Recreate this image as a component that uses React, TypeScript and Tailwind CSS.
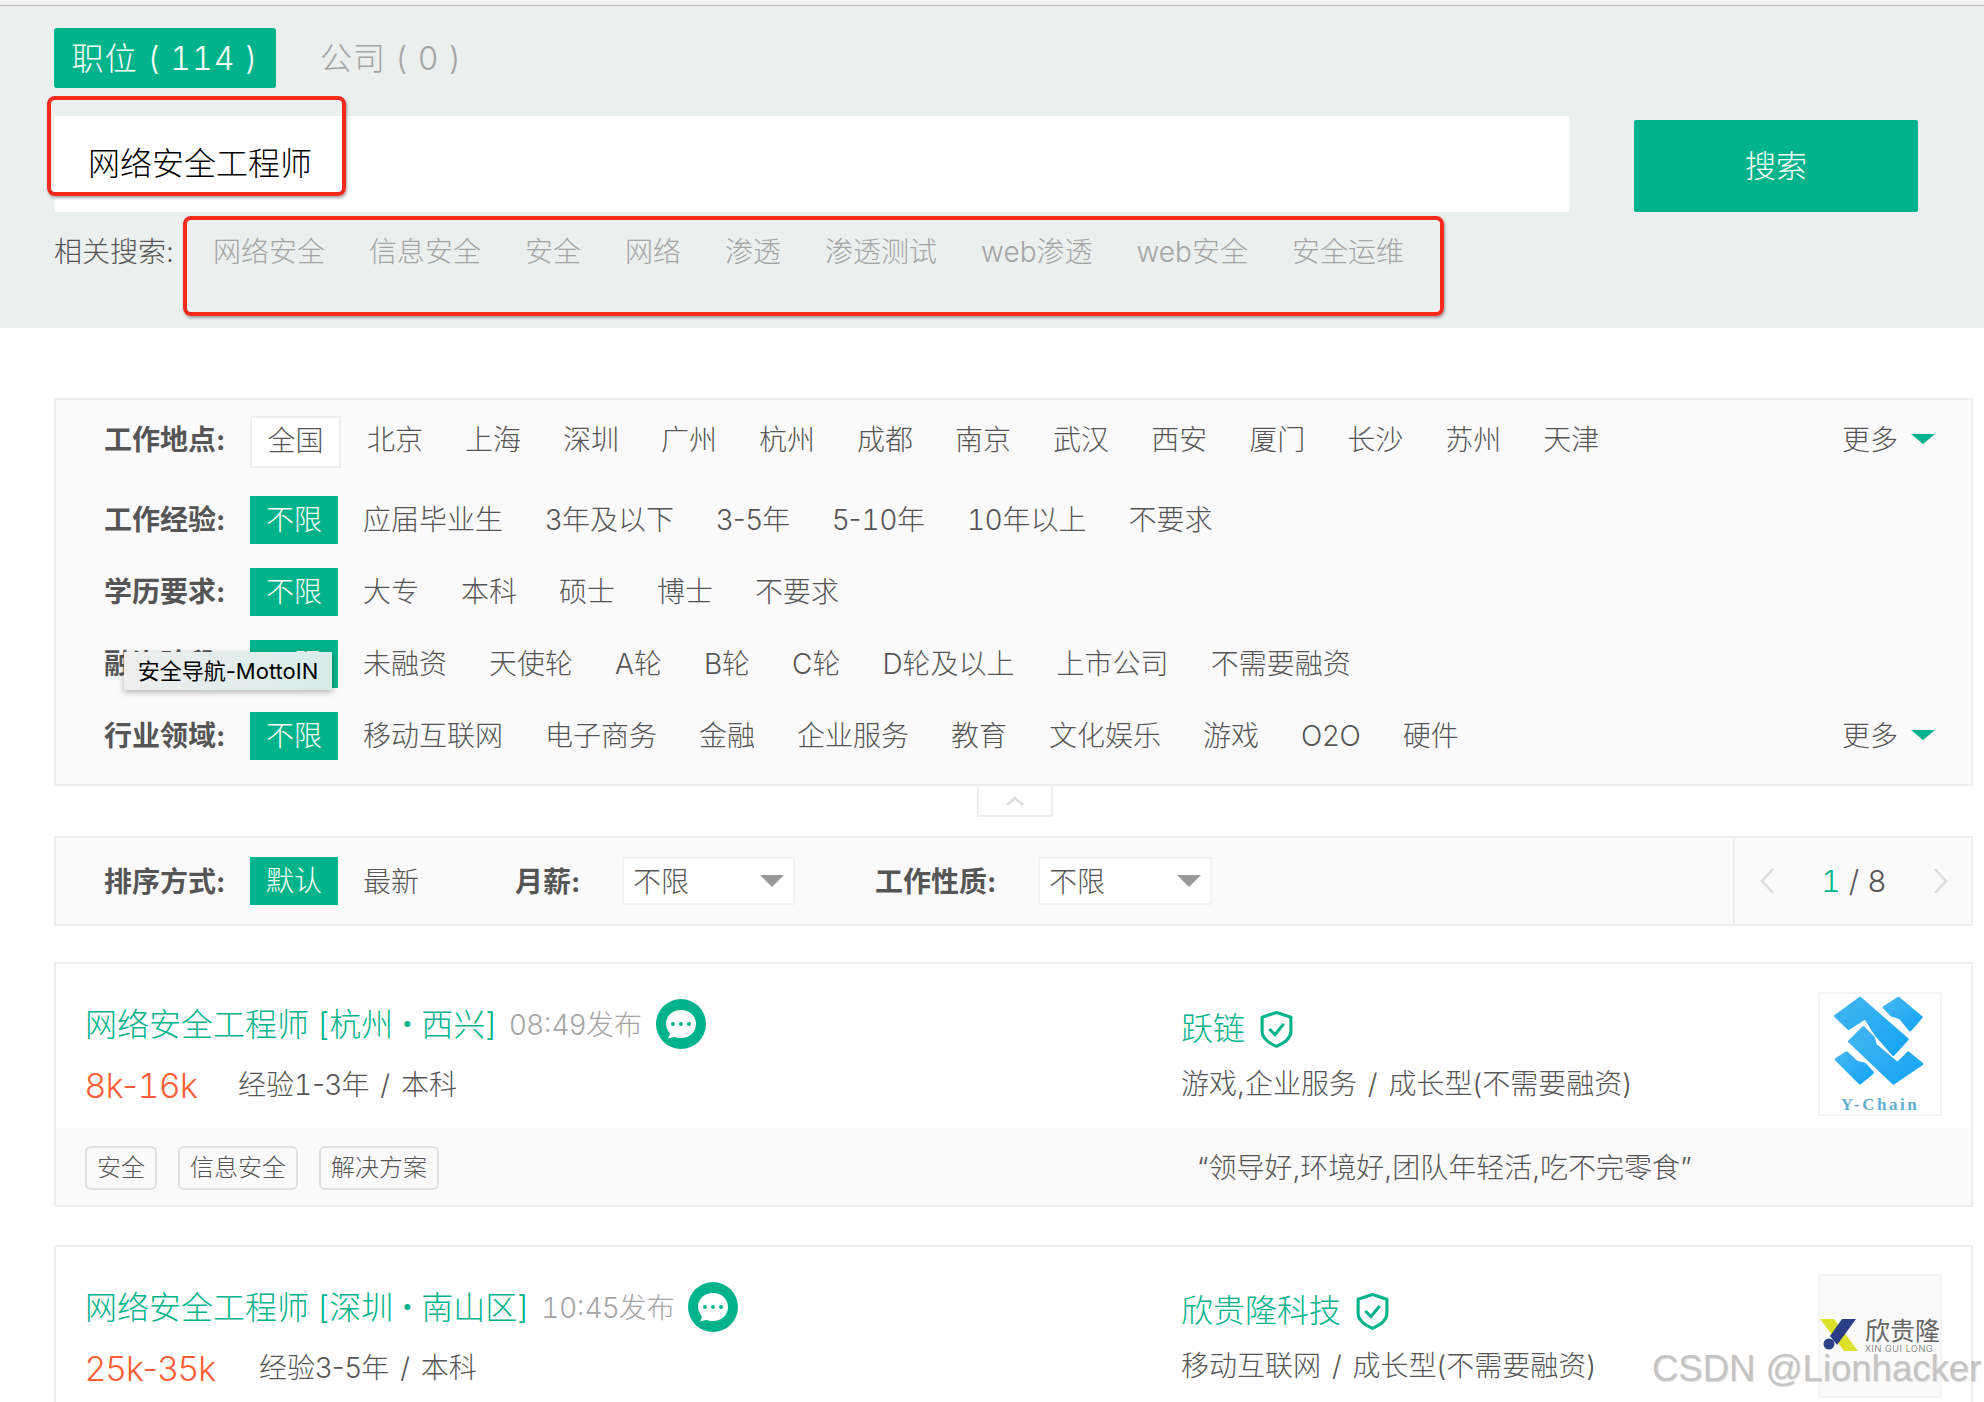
const related = ["网络安全", "信息安全", "安全", "网络", "渗透", "渗透测试", "web渗透", "web安全", "安全运维"];

const filters = [
  { label: "工作地点:", first: "全国", items: ["北京", "上海", "深圳", "广州", "杭州", "成都", "南京", "武汉", "西安", "厦门", "长沙", "苏州", "天津"], more: true },
  { label: "工作经验:", first: "不限", items: ["应届毕业生", "3年及以下", "3-5年", "5-10年", "10年以上", "不要求"] },
  { label: "学历要求:", first: "不限", items: ["大专", "本科", "硕士", "博士", "不要求"] },
  { label: "融资阶段:", first: "不限", items: ["未融资", "天使轮", "A轮", "B轮", "C轮", "D轮及以上", "上市公司", "不需要融资"] },
  { label: "行业领域:", first: "不限", items: ["移动互联网", "电子商务", "金融", "企业服务", "教育", "文化娱乐", "游戏", "O2O", "硬件"], more: true },
];

// the digit 1 is as wide as the other digits in the reference
function Num({ text }: { text: string }) {
  return (
    <>
      {text.split(/(1)/).map((part, i) =>
        part === "1" ? <span key={i} className="tabular-nums">1</span> : part
      )}
    </>
  );
}

function ChatIcon() {
  return (
    <svg width="50" height="50" viewBox="0 0 50 50" className="shrink-0 -translate-y-[1px]">
      <circle cx="25" cy="25" r="25" fill="#00b38a" />
      <path d="M25 11c8.500 0 15 6 15 14s-6.500 14-15 14c-3 0-5-.5-7-1l-6 1.500 2-5C12 32 10 29 10 25c0-8 6.500-14 15-14z" fill="#fff" />
      <circle cx="17" cy="25" r="2" fill="#00b38a" />
      <circle cx="25" cy="25" r="2" fill="#00b38a" />
      <circle cx="33" cy="25" r="2" fill="#00b38a" />
    </svg>
  );
}

function ShieldIcon() {
  return (
    <svg width="33" height="37" viewBox="0 0 32 36" className="shrink-0" fill="none" stroke="#00b38a">
      <path d="M16 1.500 30 6v14c0 6-6 11-14 14.500C8 31 2 26 2 20V6z" strokeWidth="3" strokeLinejoin="round" />
      <path d="M9 17.500l5.500 5.500L23 12.500" strokeWidth="3" />
    </svg>
  );
}

function Triangle() {
  return <span className="inline-block w-0 h-0 -translate-y-[1px] border-x-[12px] border-x-transparent border-t-[10px] border-t-[#00b38a]" />;
}

function SelectBox({ width }: { width: string }) {
  return (
    <div className={`${width} h-[48px] bg-white border-2 border-[#f2f2f2] flex items-center justify-between pl-[9px] pr-[9px] text-[28px] text-[#555]`}>
      <span className="translate-y-[1px]">不限</span>
      <span className="inline-block w-0 h-0 border-x-[12px] border-x-transparent border-t-[12px] border-t-[#999]" />
    </div>
  );
}

function Slash() {
  return <span className="mx-[3px]">/</span>;
}

function YChainLogo() {
  return (
    <div className="w-[124px] h-[124px] border-2 border-[#f4f4f4] bg-white shrink-0 flex flex-col items-center">
      <svg width="120" height="96" viewBox="30 30 360 288" className="shrink-0">
        <defs>
          <linearGradient id="yc" x1="0" y1="0" x2="1" y2="1">
            <stop offset="0" stopColor="#45b4f0" />
            <stop offset="1" stopColor="#12a5f5" />
          </linearGradient>
        </defs>
        <g fill="url(#yc)" stroke="url(#yc)" strokeWidth="8" strokeLinejoin="round">
          <path d="M76 96 150 42 292 166 250 212 196 150 166 102 116 134z" />
          <path d="M222 70 265 42 334 100 300 138 270 102 245 94z" />
          <path d="M118 172 160 130 190 160 196 182 262 238 295 206 336 240 250 298z" />
          <path d="M78 226 110 206 140 234 164 240 188 266 150 298z" />
        </g>
      </svg>
      <span className="mt-[6px] font-['Liberation_Serif',serif] font-bold text-[17px] leading-[18px] tracking-[2.5px] text-[#5fb0d2]">Y-Chain</span>
    </div>
  );
}

function XinGuiLogo() {
  return (
    <div className="w-[124px] h-[124px] border-2 border-[#f4f4f4] bg-[#fafafa] shrink-0 flex items-start pt-[42px]">
      <svg width="38" height="34" viewBox="0 0 38 34" className="shrink-0">
        <path d="M0 1h14l24 32H24L13 18z" fill="#dde02a" />
        <path d="M22 1h14L17 27 10 18z" fill="#2a3f86" />
        <circle cx="9" cy="26" r="5.500" fill="#2a3f86" />
      </svg>
      <div className="flex flex-col ml-[7px] -mt-[2px]">
        <span className="text-[25px] leading-[26px] font-normal text-[#666] whitespace-nowrap font-['Noto_Sans_CJK_SC',sans-serif]">欣贵隆</span>
        <span className="text-[9px] leading-[10px] tracking-[0.6px] text-[#666] mt-[2px] whitespace-nowrap">XIN GUI LONG</span>
      </div>
    </div>
  );
}

export default function App() {
  return (
    <div className="relative w-[1984px] h-[1402px] overflow-hidden bg-white text-[#555] font-['Inter','Noto_Sans_CJK_SC',sans-serif] font-light">
      <div className="h-[6px] bg-[#f2f2f2] border-b border-[#bbb]" />

      {/* search header */}
      <div className="h-[322px] bg-[#ebefee] px-[54px] pt-[22px]">
        <div className="flex items-center h-[60px]">
          <div className="w-[222px] h-[60px] pt-[1px] bg-[#00b38a] rounded-[3px] flex items-center justify-center text-[32px] text-white tracking-[1px] whitespace-pre tabular-nums">职位 ( 114 )</div>
          <div className="ml-[44px] pt-[1px] text-[32px] text-[#a5a5a5] tracking-[1px] whitespace-pre">公司 ( 0 )</div>
        </div>
        <div className="flex mt-[28px]">
          <div className="w-[1516px] h-[96px] bg-white rounded-[3px] pl-[34px] pb-[1px] flex items-center text-[32px] text-black font-light">网络安全工程师</div>
          <div className="ml-[64px] mt-[4px] w-[284px] h-[92px] bg-[#00b38a] rounded-[2px] flex items-center justify-center text-[31px] text-white">搜索</div>
        </div>
        <div className="flex items-center mt-[19px] h-[42px] text-[28px] whitespace-nowrap">
          <span className="w-[159px] text-[#555]">相关搜索:</span>
          <div className="flex gap-[44px] text-[#a5a5a5]">
            {related.map((r) => (
              <span key={r}>{r}</span>
            ))}
          </div>
        </div>
      </div>

      {/* filters */}
      <div className="ml-[54px] mr-[11px] mt-[70px]">
        <div className="border-2 border-[#eee] bg-[#fafafa] pl-[48px] pr-[36px] pt-[16px] pb-[24px] flex flex-col gap-[24px]">
          {filters.map((f, i) => (
            <div key={f.label} className={`flex items-center text-[28px] whitespace-nowrap ${i === 0 ? "h-[52px] mb-[4px]" : "h-[48px]"}`}>
              <span className={`w-[146px] font-bold text-[#555] ${i === 0 ? "-translate-y-[2px]" : ""}`}>{f.label}</span>
              {i === 0 ? (
                <span className="w-[91px] h-[52px] mr-[26px] pb-[2px] bg-white border-2 border-[#eee] flex items-center justify-center">{f.first}</span>
              ) : (
                <span className="w-[88px] h-[48px] mr-[25px] bg-[#00b38a] text-white flex items-center justify-center">{f.first}</span>
              )}
              <div className={`flex gap-[42px] ${i === 0 ? "-translate-y-[2px]" : ""}`}>
                {f.items.map((it) => (
                  <span key={it}><Num text={it} /></span>
                ))}
              </div>
              {f.more && (
                <div className={`ml-auto flex items-center gap-[13px] ${i === 0 ? "-translate-y-[2px]" : ""}`}>
                  <span>更多</span>
                  <Triangle />
                </div>
              )}
            </div>
          ))}
        </div>
        <div className="ml-[923px] w-[76px] h-[31px] border-2 border-t-0 border-[#eee] flex items-center justify-center">
          <svg width="20" height="12" viewBox="0 0 20 12" fill="none" stroke="#ddd" strokeWidth="2.500">
            <path d="M2 10 10 3l8 7" />
          </svg>
        </div>

        {/* sort bar */}
        <div className="mt-[19px] h-[90px] border-2 border-[#eee] bg-[#fafafa] pl-[48px] flex items-center text-[28px] whitespace-nowrap">
          <span className="w-[146px] font-bold translate-y-[1px]">排序方式:</span>
          <span className="w-[88px] h-[48px] mr-[25px] bg-[#00b38a] text-white flex items-center justify-center">默认</span>
          <span className="w-[152px] translate-y-[1px]">最新</span>
          <span className="w-[107px] font-bold translate-y-[1px]">月薪:</span>
          <SelectBox width="w-[173px]" />
          <span className="ml-[80px] w-[163px] font-bold translate-y-[1px]">工作性质:</span>
          <SelectBox width="w-[174px]" />
          <div className="ml-auto h-full w-[238px] border-l-2 border-[#eee] flex items-center justify-between pl-[24px] pr-[22px]">
            <svg width="16" height="28" viewBox="0 0 16 28" fill="none" stroke="#ddd" strokeWidth="2.500">
              <path d="M14 2 3 14l11 12" />
            </svg>
            <span className="text-[30px] whitespace-pre tabular-nums">
              <span className="text-[#00b38a]">1</span> / 8
            </span>
            <svg width="16" height="28" viewBox="0 0 16 28" fill="none" stroke="#ddd" strokeWidth="2.500">
              <path d="M2 2l11 12L2 26" />
            </svg>
          </div>
        </div>

        {/* job cards */}
        <div className="mt-[36px] h-[245px] border-2 border-[#eee] flex flex-col">
          <div className="h-[164px] flex pl-[29px] pr-[29px]">
            <div className="w-[1096px] pt-[31px]">
              <div className="flex items-center h-[60px] whitespace-nowrap">
                <span className="text-[32px] text-[#00b38a]">网络安全工程师 [杭州<span className="-mx-[2px]">・</span>西兴]</span>
                <span className="ml-[13px] mr-[14px] text-[28px] text-[#a5a5a5]">08:49发布</span>
                <ChatIcon />
              </div>
              <div className="flex items-center h-[48px] mt-[6px] whitespace-nowrap">
                <span className="text-[34px] text-[#fd5f39] w-[153px]"><Num text="8k-16k" /></span>
                <span className="text-[28px] whitespace-pre"><Num text="经验1-3年 " /><Slash /> 本科</span>
              </div>
            </div>
            <div className="flex-1 pt-[35px]">
              <div className="flex items-center h-[60px] gap-[15px] whitespace-nowrap">
                <span className="text-[32px] text-[#00b38a]">跃链</span>
                <ShieldIcon />
              </div>
              <div className="h-[48px] mt-[1px] flex items-center text-[28px] whitespace-pre">游戏,企业服务 <Slash /> 成长型(不需要融资)</div>
            </div>
            <div className="pt-[28px]">
              <YChainLogo />
            </div>
          </div>
          <div className="flex-1 bg-[#fafafa] flex items-center pl-[29px] pt-[2px] text-[24px] whitespace-nowrap">
            <div className="w-[1112px] flex gap-[21px]">
              {["安全", "信息安全", "解决方案"].map((t) => (
                <span key={t} className="h-[44px] px-[10px] flex items-center border-2 border-[#e0e0e0] rounded-[6px]">{t}</span>
              ))}
            </div>
            <span className="text-[28px]">“领导好,环境好,团队年轻活,吃不完零食”</span>
          </div>
        </div>

        <div className="mt-[38px] h-[300px] border-2 border-[#eee] flex pl-[29px] pr-[29px]">
          <div className="w-[1096px] pt-[31px]">
            <div className="flex items-center h-[60px] whitespace-nowrap">
              <span className="text-[32px] text-[#00b38a]">网络安全工程师 [深圳<span className="-mx-[2px]">・</span>南山区]</span>
              <span className="ml-[13px] mr-[13px] text-[28px] text-[#a5a5a5]"><Num text="10:45发布" /></span>
              <ChatIcon />
            </div>
            <div className="flex items-center h-[48px] mt-[6px] whitespace-nowrap">
              <span className="text-[34px] text-[#fd5f39] w-[174px]">25k-35k</span>
              <span className="text-[28px] whitespace-pre">经验3-5年 <Slash /> 本科</span>
            </div>
          </div>
          <div className="flex-1 pt-[34px]">
            <div className="flex items-center h-[60px] gap-[15px] whitespace-nowrap">
              <span className="text-[32px] text-[#00b38a]">欣贵隆科技</span>
              <ShieldIcon />
            </div>
            <div className="h-[48px] mt-[1px] flex items-center text-[28px] whitespace-pre">移动互联网 <Slash /> 成长型(不需要融资)</div>
          </div>
          <div className="pt-[27px]">
            <XinGuiLogo />
          </div>
        </div>
      </div>

      {/* annotations pasted over the page */}
      <div className="absolute left-[47px] top-[96px] w-[299px] h-[100px] border-[4px] border-[#f5291c] rounded-[8px] shadow-[1px_2px_3px_rgba(0,0,0,0.35)]" />
      <div className="absolute left-[183px] top-[216px] w-[1261px] h-[100px] border-[4px] border-[#f5291c] rounded-[8px] shadow-[1px_2px_3px_rgba(0,0,0,0.35)]" />
      <div className="absolute left-[124px] top-[652px] w-[208px] h-[38px] flex items-center justify-center bg-gradient-to-r from-[#eeeeee] to-[#d8ecea] shadow-[0_2px_6px_rgba(0,0,0,0.3)] text-[22px] font-normal text-black whitespace-nowrap">安全导航-MottoIN</div>
      <div className="absolute left-[1652px] top-[1344px] text-[36.5px] leading-[50px] font-light text-[#c4c4c4] whitespace-nowrap font-['Liberation_Sans',sans-serif] [text-shadow:1px_1px_1px_#ddd]">CSDN @Lionhacker</div>
    </div>
  );
}
